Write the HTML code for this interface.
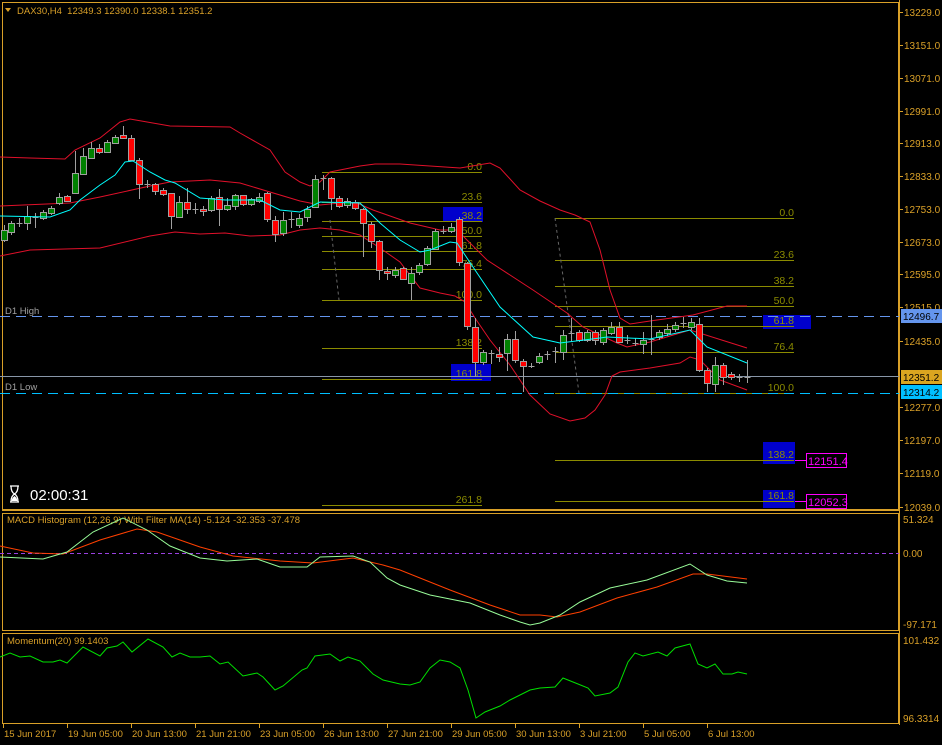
<!DOCTYPE html>
<html><head><meta charset="utf-8"><style>
html,body{margin:0;padding:0;background:#000;width:942px;height:745px;overflow:hidden}
svg{display:block}
text{font-family:"Liberation Sans",sans-serif;font-size:9.5px}
</style></head><body>
<svg id="s" width="942" height="745" xmlns="http://www.w3.org/2000/svg"></svg>
<script>
var G="#d9a028";
var o=[];
function L(x1,y1,x2,y2,c,w,d){o.push('<line x1="'+x1+'" y1="'+y1+'" x2="'+x2+'" y2="'+y2+'" stroke="'+c+'" stroke-width="'+(w||1)+'"'+(d?' stroke-dasharray="'+d+'"':'')+'/>');}
function R(x,y,w,h,f,s){o.push('<rect x="'+x+'" y="'+y+'" width="'+w+'" height="'+h+'" fill="'+f+'"'+(s?' stroke="'+s+'"':'')+'/>');}
function T(x,y,t,c,a,sz){o.push('<text x="'+x+'" y="'+y+'" fill="'+c+'"'+(a?' text-anchor="'+a+'"':'')+(sz?' style="font-size:'+sz+'px"':'')+'>'+t+'</text>');}
function P(pts,c,w,d){o.push('<polyline fill="none" stroke="'+c+'" stroke-width="'+(w||1)+'"'+(d?' stroke-dasharray="'+d+'"':'')+' points="'+pts.map(function(p){return p.join(',')}).join(' ')+'"/>');}
R(2.5,2.5,896,507,"none",G);
L(2,510.5,899,510.5,G);
R(2.5,513.5,896,117,"none",G);
R(2.5,633.5,896,90,"none",G);
L(899.5,0,899.5,725,G);
var F="#8b8b00";
var f1=[[172,"0.0"],[202,"23.6"],[221,"38.2"],[236,"50.0"],[251,"61.8"],[269,"76.4"],[300,"100.0"],[348,"138.2"],[379,"161.8"],[505,"261.8"]];
R(443,207,40,15,"#0000cc");R(451,364,40,17,"#0000cc");
f1.forEach(function(f){L(322,f[0]+.5,482,f[0]+.5,F);T(482,f[0]-2,f[1],"#8b8b00","end",10.5);});
var f2=[[218,"0.0"],[260,"23.6"],[286,"38.2"],[306,"50.0"],[326,"61.8"],[352,"76.4"],[393,"100.0"],[460,"138.2"],[501,"161.8"]];
R(763,315,48,14,"#0000cc");R(763,442,32,22,"#0000cc");R(763,490,32,18,"#0000cc");
f2.forEach(function(f){L(555,f[0]+.5,794,f[0]+.5,F);T(794,f[0]-2,f[1],"#8b8b00","end",10.5);});
L(330,220,339,300,"#666",1,"3,3");L(555,218,579,393,"#666",1,"3,3");
L(0,316.5,899,316.5,"#6495ed",1,"10,6");
L(0,393.5,899,393.5,"#00bfff",1,"10,6");
L(0,376.5,899,376.5,"#8896a8",1);
T(5,314,"D1 High","#a0a0a0");T(5,390,"D1 Low","#a0a0a0");
P([[0,157],[30,158],[65,159],[75,150],[100,138],[120,122],[130,119],[170,126],[230,127],[240,133],[270,150],[285,172],[300,182],[310,186],[320,182],[330,172],[360,166],[375,164],[400,164],[460,168],[490,163],[500,168],[520,190],[540,201],[560,210],[575,215],[590,222],[600,250],[610,290],[620,318],[630,324],[650,321],[693,315],[727,306],[747,306]],"#e0102a");
P([[0,206],[70,203],[100,197],[150,186],[170,182],[210,180],[240,183],[270,192],[300,201],[320,205],[340,203],[357,203],[373,210],[410,223],[440,230],[457,230],[467,240],[487,260],[533,290],[567,313],[583,327],[600,335],[617,343],[627,347],[650,342],[690,330],[747,348]],"#e0102a");
P([[0,256],[30,250],[100,248],[150,236],[175,232],[200,234],[225,233],[250,236],[280,235],[300,230],[320,228],[340,230],[360,235],[380,248],[400,262],[420,288],[440,293],[455,296],[465,302],[475,318],[490,340],[510,365],[530,395],[550,414],[570,421],[585,418],[595,410],[605,395],[612,376],[620,372],[650,368],[680,363],[690,357],[700,360],[720,380],[747,390]],"#e0102a");
var C=[[4,'g',230,240,225,242],[11,'g',223,232,221,235],[19,'d',222,224,218,227],[27,'g',216,223,206,230],[35,'d',216,218,213,228],[43,'g',212,218,210,220],[51,'g',208,213,206,215],[59,'g',197,203,193,205],[67,'r',196,201,195,202],[75,'g',173,193,151,194],[83,'g',156,174,148,175],[91,'g',148,158,142,159],[99,'r',148,152,144,154],[107,'g',142,152,140,153],[115,'g',137,143,135,144],[123,'r',135,138,126,139],[131,'r',138,160,135,161],[139,'r',160,184,158,199],[147,'d',183,185,180,188],[155,'r',184,191,183,195],[163,'r',190,194,188,196],[171,'r',193,216,193,229],[179,'g',202,217,196,218],[187,'r',202,209,188,214],[195,'d',208,210,203,214],[203,'r',209,211,206,216],[211,'g',198,210,196,212],[219,'r',197,209,189,226],[227,'g',205,209,198,211],[235,'g',195,206,194,210],[243,'r',195,204,195,206],[251,'g',199,204,198,206],[259,'g',197,201,193,203],[267,'r',193,219,192,222],[275,'r',220,234,216,242],[283,'g',220,233,212,236],[291,'d',218,220,212,228],[299,'g',218,225,214,228],[307,'g',209,217,206,222],[315,'g',179,207,175,208],[323,'d',177,179,175,190],[331,'r',178,198,177,210],[339,'r',198,206,196,208],[347,'g',201,205,198,208],[355,'r',202,208,200,210],[363,'r',209,223,208,257],[371,'r',224,241,222,248],[379,'r',241,270,240,280],[387,'r',271,273,267,280],[395,'g',270,275,267,278],[403,'r',268,279,267,280],[411,'g',273,283,267,300],[419,'g',265,272,263,275],[427,'g',248,264,246,266],[435,'g',231,249,229,250],[443,'d',230,232,226,234],[451,'g',227,231,223,233],[459,'r',219,262,217,266],[467,'r',263,326,262,330],[475,'r',327,362,318,377],[483,'g',352,362,350,365],[491,'d',352,354,350,364],[499,'r',354,357,347,362],[507,'g',339,353,334,371],[515,'r',339,360,331,363],[523,'r',361,366,359,392],[531,'d',365,367,363,368],[539,'g',356,362,353,364],[547,'d',353,355,351,360],[555,'d',350,352,347,363],[563,'g',335,352,330,360],[571,'d',332,334,318,342],[579,'r',332,340,330,342],[587,'g',332,340,330,342],[595,'r',332,340,330,345],[603,'g',330,342,328,345],[611,'g',327,333,322,335],[619,'r',327,342,322,343],[627,'d',339,341,335,344],[635,'d',342,344,338,346],[643,'g',340,344,332,354],[651,'d',338,340,315,355],[659,'g',332,337,330,340],[667,'g',329,333,324,336],[675,'g',325,329,322,332],[683,'d',322,324,317,328],[691,'g',322,327,318,330],[699,'r',324,370,318,372],[707,'r',370,383,368,392],[715,'g',365,384,357,392],[723,'r',365,377,363,385],[731,'r',374,377,372,380],[739,'d',376,378,374,382],[747,'d',376,378,360,383]];
C.forEach(function(c){var x=c[0]+.5;L(x,c[4],x,c[5],"#a0a0a0");
 if(c[1]=='d'){L(x-3,c[2]+1.5,x+3,c[2]+1.5,"#a0a0a0");}
 else R(c[0]-2.5,c[2]+.5,6,c[3]-c[2],c[1]=='g'?"#008000":"#ff0000","#a0a0a0");});
P([[0,216],[50,217],[70,210],[80,200],[100,185],[115,175],[125,162],[133,161],[150,172],[165,180],[175,183],[200,198],[225,200],[260,200],[280,210],[300,212],[320,202],[360,203],[380,223],[400,240],[420,252],[430,250],[450,242],[457,243],[473,267],[500,307],[533,337],[560,343],[600,338],[607,337],[650,339],[690,330],[707,347],[747,363]],"#00ffff");
L(795,460.5,806,460.5,"#ff00ff");L(795,501.5,806,501.5,"#ff00ff");
R(806.5,453.5,40,14,"#000","#ff00ff");R(806.5,494.5,40,14,"#000","#ff00ff");
T(808,465,"12151.4","#ff00ff","",11);T(808,506,"12052.3","#ff00ff","",11);
o.push('<polygon points="5,8 11,8 8,12" fill="'+G+'"/>');
T(17,14,"DAX30,H4&#160;&#160;12349.3 12390.0 12338.1 12351.2",G);
o.push('<path d="M10,486 h9 M10,502 h9 M11,486 q0,6 3.5,8 q-3.5,2 -3.5,8 M18,486 q0,6 -3.5,8 q3.5,2 3.5,8" stroke="#fff" stroke-width="1.3" fill="none"/><path d="M11.5,501 q1,-4 3,-5 q2,1 3,5z" fill="#fff"/>');
T(30,500,"02:00:31","#fff","",15);
var ax=[[12,"13229.0"],[45,"13151.0"],[78,"13071.0"],[111,"12991.0"],[143,"12913.0"],[176,"12833.0"],[209,"12753.0"],[242,"12673.0"],[274,"12595.0"],[307,"12515.0"],[341,"12435.0"],[407,"12277.0"],[440,"12197.0"],[473,"12119.0"],[507,"12039.0"]];
ax.forEach(function(a){L(899,a[0]+.5,903,a[0]+.5,G);T(904,a[0]+4,a[1],G,"",10);});
R(901,309,41,14,"#6495ed");T(903,320,"12496.7","#000","",10);
R(901,370,41,14,"#daa520");T(903,381,"12351.2","#000","",10);
R(901,385,41,14,"#00bfff");T(903,396,"12314.2","#000","",10);
T(7,523,"MACD Histogram (12,26,9) With Filter MA(14) -5.124 -32.353 -37.478",G);
L(0,553.5,899,553.5,"#9a40e0",1,"4,3");
P([[0,546],[33,553],[63,554],[100,540],[137,529],[157,532],[200,547],[233,556],[280,561],[313,563],[353,558],[383,565],[400,570],[450,590],[490,605],[520,615],[540,615],[557,617],[580,612],[617,598],[657,587],[693,574],[707,574],[747,579]],"#ff4000");
P([[0,557],[43,559],[67,552],[93,532],[123,518],[147,530],[170,546],[200,558],[227,561],[257,559],[280,567],[307,567],[320,557],[353,556],[370,562],[387,578],[400,585],[430,595],[470,603],[500,615],[520,622],[530,625],[540,623],[560,615],[580,602],[610,588],[647,580],[690,564],[707,575],[727,581],[747,583]],"#98fb98");
T(903,523,"51.324",G,"",10);T(903,557,"0.00",G,"",10);T(903,628,"-97.171",G,"",10);
T(7,644,"Momentum(20) 99.1403",G);
P([[0,657],[10,653],[20,657],[30,656],[43,662],[53,662],[60,660],[67,663],[83,647],[100,656],[107,648],[117,646],[123,642],[132,652],[148,639],[163,647],[172,657],[180,653],[190,657],[200,657],[210,656],[220,664],[228,662],[243,676],[257,673],[263,677],[275,690],[283,686],[302,670],[307,668],[315,656],[330,654],[340,661],[348,657],[360,661],[373,674],[383,680],[400,684],[410,685],[420,682],[430,668],[440,660],[450,662],[460,668],[468,690],[476,718],[485,712],[500,706],[510,700],[520,695],[530,690],[540,688],[555,687],[563,678],[578,684],[588,688],[595,696],[610,693],[618,687],[628,662],[635,653],[643,656],[658,652],[667,656],[675,648],[690,644],[698,664],[707,668],[715,664],[723,674],[732,674],[738,672],[747,674]],"#00e000");
T(903,644,"101.432",G,"",10);T(903,722,"96.3314",G,"",10);
var tx=[[3,"15 Jun 2017"],[67,"19 Jun 05:00"],[131,"20 Jun 13:00"],[195,"21 Jun 21:00"],[259,"23 Jun 05:00"],[323,"26 Jun 13:00"],[387,"27 Jun 21:00"],[451,"29 Jun 05:00"],[515,"30 Jun 13:00"],[579,"3 Jul 21:00"],[643,"5 Jul 05:00"],[707,"6 Jul 13:00"]];
tx.forEach(function(t){L(t[0]+.5,724,t[0]+.5,728,G);T(t[0]+1,737,t[1],G);});
document.getElementById('s').innerHTML=o.join('');
</script>
</body></html>
